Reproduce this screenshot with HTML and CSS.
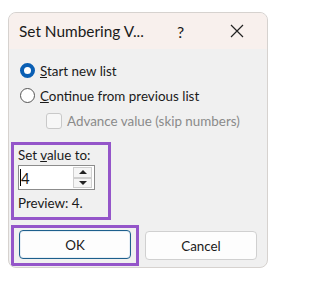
FILE: index.html
```html
<!DOCTYPE html>
<html lang="en">
<head>
    <meta charset="UTF-8">
    <title>Set Numbering Value</title>
    <link rel="stylesheet" href="styles.css">
</head>
<body>
    <div class="dialog">
        <div class="titlebar">
            <span class="title">Set Numbering V...</span>
            <span class="help">?</span>
            <span class="close">
                <svg width="14" height="14" viewBox="0 0 14 14"><path d="M1 1 L13 13 M13 1 L1 13" stroke="#222" stroke-width="1.2" fill="none"/></svg>
            </span>
        </div>
        <div class="body">
            <label class="row">
                <span class="radio checked"></span>
                <span><u>S</u>tart new list</span>
            </label>
            <label class="row">
                <span class="radio"></span>
                <span><u>C</u>ontinue from previous list</span>
            </label>
            <label class="row sub disabled">
                <span class="check"></span>
                <span>Advance value (skip numbers)</span>
            </label>
            <div class="value_group">
                <div class="line">Set <u>v</u>alue to:</div>
                <div class="spin">
                    <span class="spin_text"><span class="caret"></span>4</span>
                    <span class="spin_buttons">
                        <span class="spin_up"></span>
                        <span class="spin_down"></span>
                    </span>
                </div>
                <div class="line">Preview: 4.</div>
            </div>
            <div class="buttons">
                <div class="ok_wrap">
                    <button type="button" class="button button_ok">OK</button>
                </div>
                <button type="button" class="button">Cancel</button>
            </div>
        </div>
    </div>
</body>
</html>
```

FILE: styles.css
```css
body {
    margin: 0;
    background: #fff;
    font-family: Lato, "Noto Sans", sans-serif;
    font-size: 13.4px;
    color: #1a1a1a;
}

.dialog {
    width: 258px;
    height: 254px;
    margin: 12px 0 0 8px;
    border: 1px solid #d6d2cf;
    border-radius: 8px;
    overflow: hidden;
    background: #f0f0f0;
}

.titlebar {
    display: flex;
    align-items: center;
    height: 36px;
    padding-left: 10px;
    background: #f8f0ed;
}

.title {
    width: 158px;
    font-size: 15.4px;
}

.help {
    width: 53px;
    font-size: 16px;
}

.close {
    display: flex;
}

.body {
    padding: 9px 0 0 1px;
}

.row {
    display: flex;
    align-items: center;
    height: 25px;
    padding-left: 10px;
}

.radio {
    width: 13px;
    height: 13px;
    margin-right: 5px;
    border: 1px solid #555;
    border-radius: 50%;
    background: #fff;
}

.radio.checked {
    box-sizing: border-box;
    width: 15px;
    height: 15px;
    border: 4px solid #0a5fb4;
}

.sub {
    padding-left: 36px;
}

.check {
    box-sizing: border-box;
    width: 16px;
    height: 16px;
    margin-right: 5px;
    border: 1px solid #c9c9c9;
    border-radius: 3px;
    background: #f7f7f7;
}

.disabled {
    color: #8a8a8a;
}

.value_group {
    width: 86px;
    margin: 9px 0 0 1px;
    padding: 0 4px 4px;
    border: 3px solid #9455c9;
}

.line {
    height: 20px;
    line-height: 20px;
}

.spin {
    display: flex;
    box-sizing: border-box;
    width: 77px;
    height: 25px;
    margin: 0 0 3px;
    border: 1px solid #8c8c8c;
    background: #fff;
}

.spin_text {
    display: flex;
    align-items: center;
    flex: 1;
    padding-left: 1px;
    font-size: 15px;
}

.caret {
    width: 1px;
    height: 17px;
    background: #000;
}

.spin_buttons {
    display: flex;
    flex-direction: column;
    width: 19px;
    margin: 1px 2px 1px 0;
}

.spin_up,
.spin_down {
    flex: 1;
    display: flex;
    align-items: center;
    justify-content: center;
    border: 1px solid #cfcfcf;
    background: #f5f5f5;
}

.spin_up::before {
    border: 4px solid transparent;
    border-top: 0;
    border-bottom: 4px solid #222;
    content: '';
}

.spin_down::before {
    border: 4px solid transparent;
    border-bottom: 0;
    border-top: 4px solid #222;
    content: '';
}

.buttons {
    display: flex;
    align-items: center;
    margin: 5px 0 0 1px;
}

.ok_wrap {
    padding: 2px 5px 4px;
    border: 3px solid #9455c9;
}

.button {
    box-sizing: border-box;
    width: 112px;
    height: 29px;
    border: 1px solid #d0d0d0;
    border-radius: 4px;
    background: #fdfdfd;
    font-family: inherit;
    font-size: 13.4px;
    color: #1a1a1a;
}

.button_ok {
    border: 1px solid #1d5f8c;
    box-shadow: inset 0 0 0 1px #e6eef5;
}

.ok_wrap + .button {
    margin-left: 6px;
}
```
